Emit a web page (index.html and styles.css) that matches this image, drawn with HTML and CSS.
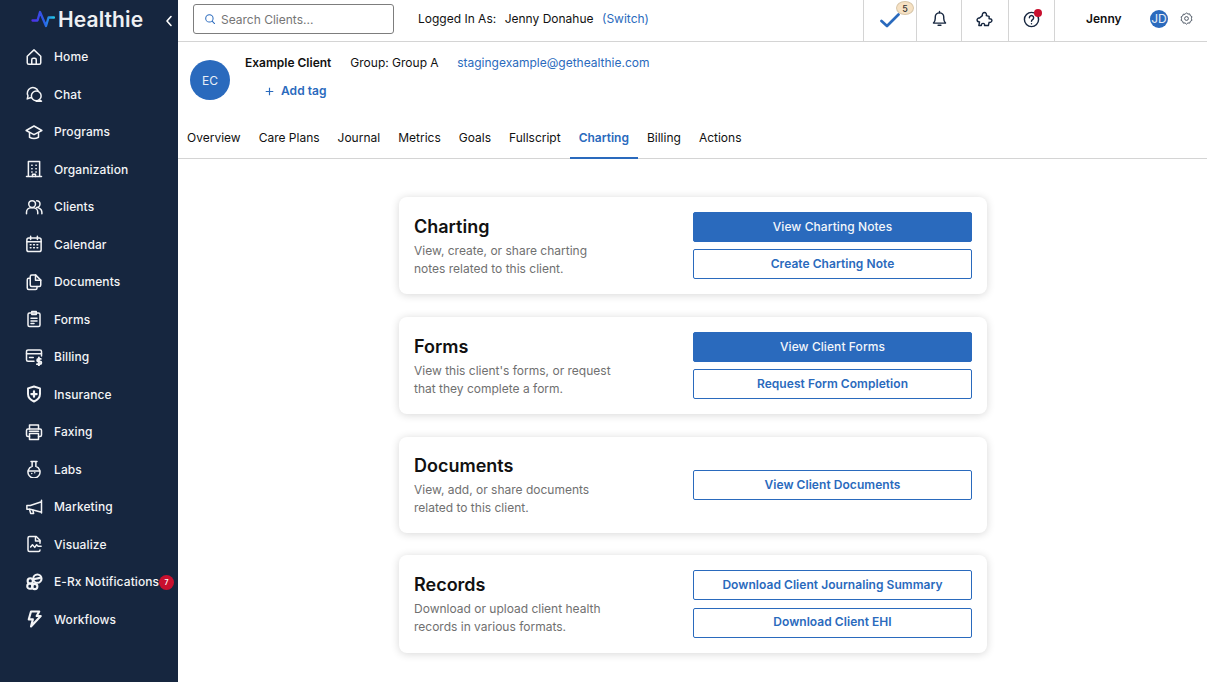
FILE: index.html
```html
<!DOCTYPE html>
<html lang="en">
<head>
<meta charset="utf-8">
<title>Healthie</title>
<link rel="stylesheet" href="styles.css">
</head>
<body>
<div class="app">
  <aside class="sidebar">
    <div class="brand">
      <svg class="brand-mark" viewBox="0 0 24 18" fill="none"><defs><linearGradient id="pulse" x1="0" x2="1" y1="0" y2="0"><stop offset="0" stop-color="#4f2fe8"/><stop offset=".55" stop-color="#2a5fe8"/><stop offset="1" stop-color="#22c7e8"/></linearGradient></defs><path d="M1.500 10.500h5L9 2l6 14 2.500-8.500H23" stroke="url(#pulse)" stroke-width="2.300" stroke-linecap="round" stroke-linejoin="round"/></svg>
      <span class="brand-name">Healthie</span>
      <svg class="collapse" viewBox="0 0 8 12" fill="none"><path d="M6 1.500 2 6l4 4.500" stroke="#fff" stroke-width="1.600" stroke-linecap="round" stroke-linejoin="round"/></svg>
    </div>
    <nav class="nav">
      <a class="nav-item"><svg class="nav-icon" viewBox="0 0 24 24"><path d="M3 11 12 2.500 21 11v8.500a2 2 0 0 1-2 2H5a2 2 0 0 1-2-2z"/><path d="M9 21.500v-6a2 2 0 0 1 2-2h2a2 2 0 0 1 2 2v6"/></svg>Home</a>
      <a class="nav-item"><svg class="nav-icon" viewBox="0 0 24 24"><path d="M8.500 17H7l-4 1.500 1-4A7.500 7.500 0 1 1 17.500 8"/><circle cx="15" cy="14.500" r="6.500"/><path d="M19 20l3 1.500h-7"/></svg>Chat</a>
      <a class="nav-item"><svg class="nav-icon" viewBox="0 0 24 24"><path d="M12 4 1.500 10 12 15.500 22.500 10z"/><path d="M6 12.500V19c3.500 2 8.500 2 12 0v-6.500"/></svg>Programs</a>
      <a class="nav-item"><svg class="nav-icon" viewBox="0 0 24 24"><path d="M4.500 22V2h15v20M2 22h20"/><path d="M9 7h.5M14.500 7h.5M9 11.500h.5M14.500 11.500h.5M9 16h.5M14.500 16h.5M10 22v-3h4v3"/></svg>Organization</a>
      <a class="nav-item"><svg class="nav-icon" viewBox="0 0 24 24"><circle cx="9.500" cy="8" r="4.500"/><path d="M2 21v-2a6 6 0 0 1 6-6h3a6 6 0 0 1 6 6v2"/><path d="M15.500 3.500a4.500 4.500 0 0 1 0 9M18.500 13.500a6 6 0 0 1 4 5.500v2"/></svg>Clients</a>
      <a class="nav-item"><svg class="nav-icon" viewBox="0 0 24 24"><rect x="2.500" y="4" width="19" height="18" rx="2.500"/><path d="M7.500 1.500V6M16.500 1.500V6M2.500 9h19M7 13h1M11.500 13h1M16 13h1M7 17h1M11.500 17h1M16 17h1"/></svg>Calendar</a>
      <a class="nav-item"><svg class="nav-icon" viewBox="0 0 24 24"><path d="M9 2.500h5l7 7V16a2 2 0 0 1-2 2H9a2 2 0 0 1-2-2V4.500a2 2 0 0 1 2-2z"/><path d="M14 2.500V9.500h7"/><path d="M7 7H5a2 2 0 0 0-2 2v11a2 2 0 0 0 2 2h9a2 2 0 0 0 2-2v-2"/></svg>Documents</a>
      <a class="nav-item"><svg class="nav-icon" viewBox="0 0 24 24"><rect x="4" y="4" width="16" height="18" rx="2"/><path d="M9 4V2h6v2M9 6h6V4M8 11h8M8 14.500h8M8 18h4"/></svg>Forms</a>
      <a class="nav-item"><svg class="nav-icon" viewBox="0 0 24 24"><path d="M12 17.500H4a2 2 0 0 1-2-2v-11a2 2 0 0 1 2-2h16a2 2 0 0 1 2 2v6"/><path d="M2 7.500h20M6 12.500h5"/><path class="thick" d="M21 14.500h-3a1.500 1.500 0 0 0 0 3.500h2a1.500 1.500 0 0 1 0 3.500h-4M18.500 12.500v11"/></svg>Billing</a>
      <a class="nav-item"><svg class="nav-icon" viewBox="0 0 24 24"><path class="thick" d="M12 2 4 4.500V12c0 4.500 3.500 8 8 10 4.500-2 8-5.500 8-10V4.500z"/><path class="fat" d="M12 8.500v7M8.500 12h7"/></svg>Insurance</a>
      <a class="nav-item"><svg class="nav-icon" viewBox="0 0 24 24"><path d="M6 8V2.500h12V8"/><path d="M6 18H4a2 2 0 0 1-2-2v-6a2 2 0 0 1 2-2h16a2 2 0 0 1 2 2v6a2 2 0 0 1-2 2h-2"/><rect x="6" y="14" width="12" height="8"/><path d="M6 11h12"/></svg>Faxing</a>
      <a class="nav-item"><svg class="nav-icon" viewBox="0 0 24 24"><path d="M8 2h8M9.500 2v6.500a8 8 0 1 0 5 0V2"/><path d="M4.500 14.500h15M9 18h.01M13 17h.01"/></svg>Labs</a>
      <a class="nav-item"><svg class="nav-icon" viewBox="0 0 24 24"><path d="M22 3v17M22 5 7 10H2.500v5H7l15 4"/><path d="M6 15l1.500 5.500h4L10.500 16.500"/></svg>Marketing</a>
      <a class="nav-item"><svg class="nav-icon" viewBox="0 0 24 24"><path d="M20 11V7l-5-5H6a2 2 0 0 0-2 2v16a2 2 0 0 0 2 2h12a2 2 0 0 0 2-2"/><path d="M14 2.500V8h6"/><path d="M7.500 16l2.500-3 3 3.500 2.500-3.500 2 2h4"/></svg>Visualize</a>
      <a class="nav-item"><svg class="nav-icon icon-bold" viewBox="0 0 24 24"><circle cx="16.500" cy="7.500" r="5.500"/><circle cx="7" cy="10.500" r="3.500"/><circle cx="6.500" cy="17.500" r="3.500"/><circle cx="13" cy="18" r="3.500"/><path d="M13 8l7-1.500"/></svg><span>E-Rx Notifications</span><span class="nav-badge">7</span></a>
      <a class="nav-item"><svg class="nav-icon icon-bold" viewBox="0 0 24 24"><path d="M8 2h11l-3.500 6H21L8 22l2.500-9.500H5z"/></svg>Workflows</a>
    </nav>
  </aside>
  <main class="main">
    <header class="topbar">
      <label class="search">
        <svg class="search-icon" viewBox="0 0 14 14" fill="none"><circle cx="6.300" cy="6.300" r="4.300" stroke="#2a6abd" stroke-width="1.200"/><path d="m9.500 9.500 2.800 2.800" stroke="#2a6abd" stroke-width="1.200" stroke-linecap="round"/></svg>
        <span>Search Clients...</span>
      </label>
      <div class="logged">
        <span>Logged In As:</span><span>Jenny Donahue</span><a class="link">(Switch)</a>
      </div>
      <div class="top-actions">
        <div class="top-cell cell-check">
          <svg class="check" viewBox="0 0 20 15" fill="none"><path d="M1.500 8 7 13 18.500 1.500" stroke="#2a6abd" stroke-width="2.700" stroke-linecap="round" stroke-linejoin="round"/></svg>
          <span class="check-badge">5</span>
        </div>
        <div class="top-cell cell-bell">
          <svg class="top-icon bell" viewBox="0 0 24 24" fill="none" stroke="#16263f" stroke-width="2" stroke-linejoin="round" stroke-linecap="round"><path d="M3.500 18.500c1.500-1.500 2.500-3 2.500-6.500V10a6 6 0 0 1 12 0v2c0 3.500 1 5 2.500 6.500z"/><path d="M12 2v2M10 21.500h4"/></svg>
        </div>
        <div class="top-cell cell-puzzle">
          <svg class="top-icon puzzle" viewBox="0 0 24 24" fill="none" stroke="#16263f" stroke-width="2" stroke-linejoin="round"><path d="M9 6.500c-.5-2.500 1-4.500 3-4.500s3.500 2.500 2.500 4.500l4 1v3.500c2.500-.5 4 1 4 2.500s-2 3-4 2.500l-1 4.500H12c.5-2-.5-3-2-3s-2.500 1-2.500 3H4l1-5C3 15.500 1.500 14 1.500 12.500S3 9.500 5 10z"/></svg>
        </div>
        <div class="top-cell cell-help">
          <svg class="top-icon" viewBox="0 0 24 24" fill="none" stroke="#16263f" stroke-width="2" stroke-linecap="round"><circle cx="12" cy="12" r="10"/><path d="M9 9.500a3 3 0 1 1 4.500 2.600c-1 .6-1.500 1.200-1.500 2.400"/><path d="M12 18h.01"/></svg>
          <span class="help-dot"></span>
        </div>
        <div class="user">
          <span class="user-name">Jenny</span>
          <span class="user-avatar">JD</span>
          <svg class="gear" viewBox="0 0 24 24" fill="none" stroke="#4b5563" stroke-width="1.800" stroke-linejoin="round"><path d="M12 1.500l2.600 2.300 3.400-.3 1 3.300 3 1.700-.9 3.500.9 3.500-3 1.700-1 3.300-3.400-.3L12 22.500l-2.600-2.300-3.400.3-1-3.300-3-1.700.9-3.500L2 9l3-1.700 1-3.300 3.400.3z"/><circle cx="12" cy="12" r="3.500"/></svg>
        </div>
      </div>
    </header>
    <section class="client">
      <div class="client-avatar">EC</div>
      <div class="client-info">
        <div class="client-line">
          <strong>Example Client</strong><span>Group: Group A</span><a class="link">stagingexample@gethealthie.com</a>
        </div>
        <a class="add-tag"><svg class="plus" viewBox="0 0 10 10" fill="none"><path d="M5 .8v8.400M.8 5h8.400" stroke="#2a6abd" stroke-width="1.300"/></svg>Add tag</a>
      </div>
    </section>
    <nav class="tabs">
      <a class="tab">Overview</a>
      <a class="tab">Care Plans</a>
      <a class="tab">Journal</a>
      <a class="tab">Metrics</a>
      <a class="tab">Goals</a>
      <a class="tab">Fullscript</a>
      <a class="tab tab-active">Charting</a>
      <a class="tab">Billing</a>
      <a class="tab">Actions</a>
    </nav>
    <section class="cards">
      <article class="card">
        <div class="card-text"><h2>Charting</h2><p>View, create, or share charting<br>notes related to this client.</p></div>
        <div class="card-actions"><a class="btn btn-solid">View Charting Notes</a><a class="btn">Create Charting Note</a></div>
      </article>
      <article class="card">
        <div class="card-text"><h2>Forms</h2><p>View this client's forms, or request<br>that they complete a form.</p></div>
        <div class="card-actions"><a class="btn btn-solid">View Client Forms</a><a class="btn">Request Form Completion</a></div>
      </article>
      <article class="card">
        <div class="card-text"><h2>Documents</h2><p>View, add, or share documents<br>related to this client.</p></div>
        <div class="card-actions"><a class="btn">View Client Documents</a></div>
      </article>
      <article class="card">
        <div class="card-text"><h2>Records</h2><p>Download or upload client health<br>records in various formats.</p></div>
        <div class="card-actions"><a class="btn">Download Client Journaling Summary</a><a class="btn">Download Client EHI</a></div>
      </article>
    </section>
  </main>
</div>
</body>
</html>
```
FILE: styles.css
```css
* { box-sizing: border-box; }
html, body { margin: 0; height: 100%; overflow: hidden; }
body { font-family: Inter, "Liberation Sans", sans-serif; font-size: 12px; color: #111; background: #fff; }
.app { display: flex; height: 682px; }

.sidebar { width: 178px; flex: none; background: #16263f; color: #f3f4f6; }
.brand { display: flex; align-items: center; height: 38px; padding-left: 31px; }
.brand-mark { width: 24px; height: 18px; flex: none; }
.brand-name { margin-left: 3px; font-size: 21px; font-weight: 600; letter-spacing: .1px; color: #eef0f3; }
.collapse { width: 8px; height: 12px; margin-left: 22px; margin-top: 3px; }
.nav { display: flex; flex-direction: column; }
.nav-item { display: flex; align-items: center; height: 37.500px; padding-left: 25px; font-weight: 500; font-size: 12px; letter-spacing: .1px; white-space: nowrap; position: relative; }
.nav-icon { width: 18px; height: 18px; flex: none; margin-right: 11px; fill: none; stroke: #f3f4f6; stroke-width: 2; stroke-linecap: round; stroke-linejoin: round; }
.icon-bold { stroke-width: 2.800; }
.thick { stroke-width: 2.600; }
.fat { stroke-width: 3; }
.nav-badge { width: 15px; height: 15px; border-radius: 50%; background: #c8102e; color: #fff; font-size: 7px; font-weight: 600; display: flex; align-items: center; justify-content: center; position: absolute; left: 159px; top: 12px; }

.main { flex: 1; min-width: 0; display: flex; flex-direction: column; }
.topbar { height: 42px; flex: none; display: flex; align-items: center; border-bottom: 1px solid #d4d4d4; padding-left: 15px; }
.search { width: 201px; height: 30px; margin-top: -3px; border: 1px solid #7d7d7d; border-radius: 3px; display: flex; align-items: center; padding-left: 10px; color: #757575; font-size: 12px; }
.search-icon { width: 12px; height: 12px; margin-right: 5px; flex: none; }
.logged { display: flex; gap: 8.500px; margin-left: 24px; margin-top: -4px; color: #111; }
.link { color: #2a6abd; }
.top-actions { margin-left: auto; display: flex; height: 41px; }
.top-cell { position: relative; display: flex; align-items: center; justify-content: center; border-left: 1px solid #d4d4d4; height: 41px; }
.cell-check { width: 53px; }
.cell-bell { width: 45px; }
.cell-puzzle { width: 47px; }
.cell-help { width: 46px; }
.check { width: 20px; height: 15px; margin-top: 0; }
.check-badge { position: absolute; left: 32px; top: 1px; width: 18px; height: 14px; border-radius: 50%; background: #f6e1c3; border: 1px solid #d8c6a8; font-size: 9px; font-weight: 500; display: flex; align-items: center; justify-content: center; color: #333; }
.top-icon { width: 17px; height: 17px; margin-top: -3px; }
.bell { margin-top: -5px; }
.puzzle { margin-right: 2px; }
.help-dot { position: absolute; left: 25px; top: 9px; width: 8px; height: 8px; border-radius: 50%; background: #c8102e; }
.user { width: 153px; border-left: 1px solid #d4d4d4; display: flex; align-items: center; padding-left: 31px; margin-top: 0; }
.user-name { font-weight: 600; font-size: 12px; width: 64px; margin-top: -4px; }
.user-avatar { width: 18px; height: 18px; border-radius: 50%; background: #2a6abd; color: #e8eef7; font-size: 12px; display: flex; align-items: center; justify-content: center; margin-top: -4px; }
.gear { width: 13px; height: 13px; margin-left: 12px; margin-top: -4px; }

.client { display: flex; height: 76px; padding: 18px 0 0 12px; flex: none; }
.client-avatar { width: 40px; height: 40px; border-radius: 50%; background: #2a6abd; color: #e8eef7; font-size: 12px; display: flex; align-items: center; justify-content: center; flex: none; }
.client-info { margin-left: 15px; margin-top: -5px; }
.client-line { display: flex; line-height: 16px; }
.client-line strong { font-weight: 600; margin-right: 19px; }
.client-line span { margin-right: 18.500px; }
.add-tag { display: flex; align-items: center; margin: 12px 0 0 20px; color: #2a6abd; font-weight: 600; letter-spacing: .05px; line-height: 16px; }
.plus { width: 9px; height: 9px; margin-right: 7px; }

.tabs { display: flex; height: 41px; border-bottom: 1px solid #d4d4d4; flex: none; }
.tab { display: flex; align-items: center; height: 41px; padding: 0 9px 2px; color: #111; white-space: nowrap; }
.tab-active { color: #2a6abd; font-weight: 600; border-bottom: 2px solid #2a6abd; padding-bottom: 0; }

.cards { display: flex; flex-direction: column; gap: 22.400px; padding: 38px 0 0 221px; }
.card { width: 588px; display: flex; justify-content: space-between; align-items: center; background: #fff; border-radius: 8px; box-shadow: 0 1px 8px rgba(0, 0, 0, .16); padding: 15px; }
.card-text { padding: .3px 0 .7px; }
.card-text h2 { margin: 0; font-size: 18px; font-weight: 600; line-height: 28px; color: #111; }
.card-text p { margin: 1px 0 0; font-size: 12px; line-height: 18px; color: #707070; }
.card-actions { width: 279px; display: flex; flex-direction: column; gap: 7.490px; }
.btn { display: flex; align-items: center; justify-content: center; height: 30px; padding-bottom: 1.400px; border: 1px solid #2a6abd; border-radius: 2px; color: #2a6abd; font-weight: 600; font-size: 12px; letter-spacing: .05px; }
.btn-solid { background: #2a6abd; color: #f3f6fb; font-weight: 500; letter-spacing: .08px; }
```
